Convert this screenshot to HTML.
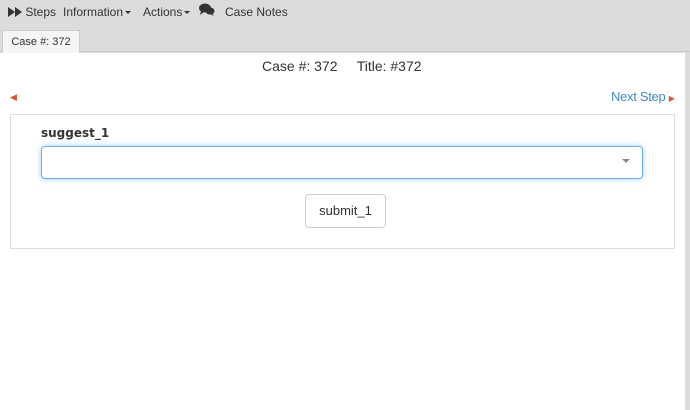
<!DOCTYPE html><html><head><style>
body{margin:0;width:690px;height:410px;background:#dcdcdc;font-family:"Liberation Sans",sans-serif;position:relative;overflow:hidden}
.a{position:absolute}
.nav{font-size:12px;color:#333;top:5px}
.car{display:inline-block;border-left:3px solid transparent;border-right:3px solid transparent;border-top:3px solid #333;vertical-align:middle;margin-left:2px}
</style></head><body>
<div class="a nav" style="left:8px"><svg width="14" height="10" style="vertical-align:-1px"><path d="M0 0L7 5L0 10Z M7 0L14 5L7 10Z" fill="#333"/></svg> Steps</div>
<div class="a nav" style="left:63px">Information<span class="car"></span></div>
<div class="a nav" style="left:143px">Actions<span class="car"></span></div>
<svg class="a" style="left:199px;top:3px" width="16" height="14"><ellipse cx="6" cy="5" rx="6" ry="4.5" fill="#333"/><path d="M2 8L1 12L5 9Z" fill="#333"/><ellipse cx="11" cy="8" rx="4.5" ry="3.5" fill="#333"/><path d="M13 10L15 13L11 11Z" fill="#333"/></svg>
<div class="a nav" style="left:225px">Case Notes</div>
<div class="a" style="left:0;top:51px;width:690px;height:1px;background:#c8c8c8"></div>
<div class="a" style="left:2px;top:30px;width:76px;height:22px;background:#f5f5f5;border:1px solid #ccc;border-bottom:none;font-size:11px;color:#333;line-height:22px;text-align:center">Case #: 372</div>
<div class="a" style="left:0;top:53px;width:685px;height:357px;background:#fff"></div>
<div class="a" style="left:262px;top:58px;font-size:14px;color:#333">Case #: 372 &nbsp;&nbsp;&nbsp; Title: #372</div>
<div class="a" style="left:10px;top:92px;font-size:9px;color:#d9552b">&#9664;</div>
<div class="a" style="left:611px;top:89px;font-size:13px;color:#428bca;letter-spacing:-0.3px">Next Step <span style="font-size:8px;color:#d9552b">&#9654;</span></div>
<div class="a" style="left:10px;top:114px;width:663px;height:133px;border:1px solid #ddd"></div>
<div class="a" style="left:41px;top:126px;font-weight:bold;color:#333;font-family:'DejaVu Sans',sans-serif;font-size:12px">suggest_1</div>
<div class="a" style="left:41px;top:146px;width:600px;height:31px;border:1px solid #66afe9;border-radius:4px;box-shadow:0 0 6px rgba(102,175,233,.6)"></div>
<div class="a" style="left:622px;top:159px;border-left:4px solid transparent;border-right:4px solid transparent;border-top:4px solid #888"></div>
<div class="a" style="left:305px;top:194px;width:79px;height:32px;border:1px solid #ccc;border-radius:4px;font-size:13px;color:#333;line-height:32px;text-align:center">submit_1</div>
</body></html>
